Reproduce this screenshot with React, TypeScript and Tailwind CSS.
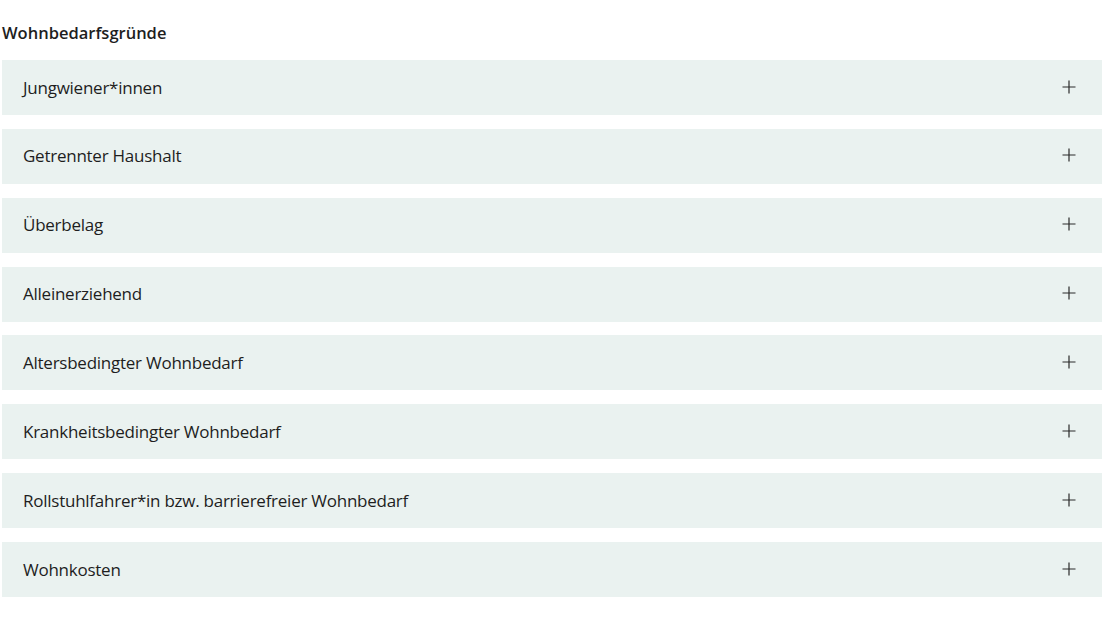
const items = [
  "Jungwiener*innen",
  "Getrennter Haushalt",
  "Überbelag",
  "Alleinerziehend",
  "Altersbedingter Wohnbedarf",
  "Krankheitsbedingter Wohnbedarf",
  "Rollstuhlfahrer*in bzw. barrierefreier Wohnbedarf",
  "Wohnkosten",
];

function PlusIcon() {
  return (
    <svg width="14" height="14" viewBox="0 0 14 14" fill="none" stroke="#2a2a2a" strokeWidth="1.2" className="-mt-[2px]">
      <path d="M7 0.5v13M0.5 7h13" />
    </svg>
  );
}

export default function App() {
  return (
    <div
      className="bg-white w-[1111px] h-[625px] pl-[2px] pr-[9px] pt-[22px] text-[#1e1e1e]"
      style={{ fontFamily: '"Open Sans", "Noto Sans", sans-serif' }}
    >
      <h2 className="text-[16.5px] font-semibold leading-[22px] mb-[16px] tracking-[0px]">Wohnbedarfsgründe</h2>
      <div className="flex flex-col gap-[13.86px]">
        {items.map((label) => (
          <button
            key={label}
            className="flex items-center justify-between h-[55px] w-full bg-[#eaf2f0] pl-[21px] pr-[26px] text-left"
          >
            <span className="text-[17px] leading-none tracking-[-0.25px] -mt-[1px]">{label}</span>
            <PlusIcon />
          </button>
        ))}
      </div>
    </div>
  );
}
